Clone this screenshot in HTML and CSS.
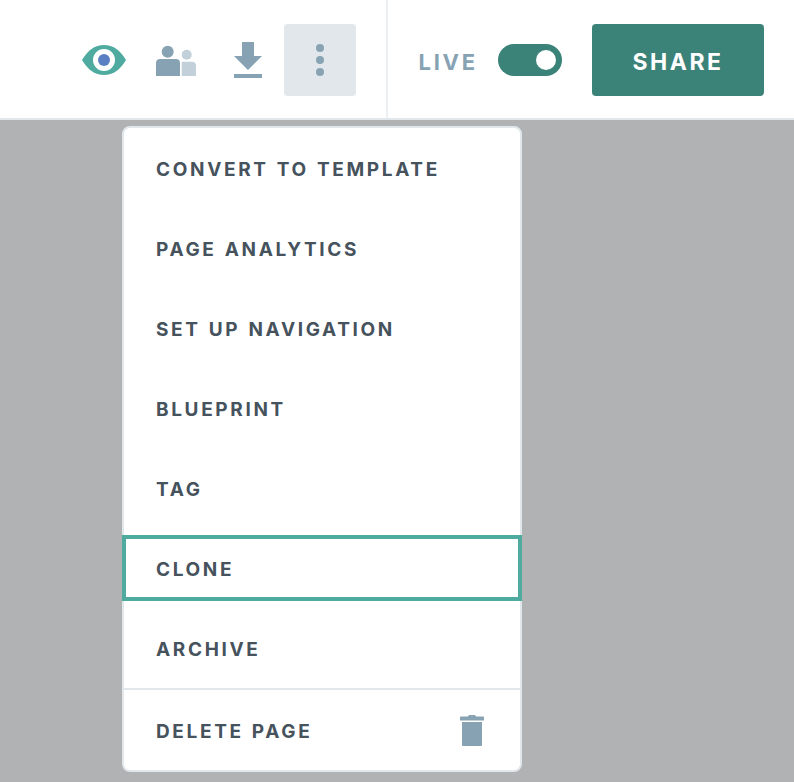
FILE: index.html
```html
<!DOCTYPE html>
<html lang="en">
<head>
    <meta charset="UTF-8">
    <meta name="viewport" content="width=device-width, initial-scale=1.0">
    <title>Page menu</title>
    <link rel="stylesheet" href="styles.css">
</head>
<body>
    <header class="toolbar">
        <div class="tools">
            <button class="tool" type="button" aria-label="Preview">
                <svg width="72" height="72" viewBox="0 0 72 72">
                    <path fill="#4fab9f" d="M14 36C20 26 27 21 36 21S52 26 58 36C52 46 45 51 36 51S20 46 14 36Z"/>
                    <circle cx="36" cy="36" r="11" fill="#fff"/>
                    <circle cx="36" cy="36" r="6" fill="#5a7fc2"/>
                </svg>
            </button>
            <button class="tool" type="button" aria-label="Collaborators">
                <svg width="72" height="72" viewBox="0 0 72 72">
                    <circle cx="46.7" cy="30.7" r="5" fill="#c2d0d9"/>
                    <path fill="#c2d0d9" d="M41.7 52V37.7H52C54.5 37.7 56 39.2 56 41.7V52Z"/>
                    <circle cx="27.7" cy="27.7" r="6" fill="#87a3b3"/>
                    <path fill="#87a3b3" d="M16 52V39C16 36.5 17.5 35 20 35H36C38.500 35 40 36.5 40 39V52Z"/>
                </svg>
            </button>
            <button class="tool" type="button" aria-label="Download">
                <svg width="72" height="72" viewBox="0 0 72 72">
                    <path fill="#87a3b3" d="M30 18H42V32H50L36 46L22 32H30Z"/>
                    <rect x="22" y="50" width="28" height="4" fill="#87a3b3"/>
                </svg>
            </button>
            <button class="tool tool-active" type="button" aria-label="More">
                <svg width="72" height="72" viewBox="0 0 72 72">
                    <circle cx="36" cy="24" r="4" fill="#87a3b3"/>
                    <circle cx="36" cy="36" r="4" fill="#87a3b3"/>
                    <circle cx="36" cy="48" r="4" fill="#87a3b3"/>
                </svg>
            </button>
        </div>
        <div class="publish">
            <span class="live-label">LIVE</span>
            <span class="switch"><span class="knob"></span></span>
            <button class="share" type="button">SHARE</button>
        </div>
    </header>

    <div class="menu">
        <ul class="menu-list">
            <li class="menu-item">CONVERT TO TEMPLATE</li>
            <li class="menu-item">PAGE ANALYTICS</li>
            <li class="menu-item">SET UP NAVIGATION</li>
            <li class="menu-item">BLUEPRINT</li>
            <li class="menu-item">TAG</li>
            <li class="menu-item menu-item-focus">CLONE</li>
            <li class="menu-item">ARCHIVE</li>
        </ul>
        <div class="menu-delete">
            <span class="delete-label">DELETE PAGE</span>
            <svg width="24" height="32" viewBox="0 0 24 32">
                <path fill="#87a3b3" d="M8 2.500C8 1.500 9 1 10 1H14C15 1 16 1.500 16 2.500H23C23.600 2.500 24 3 24 3.500V6.500H0V3.500C0 3 .4 2.500 1 2.500Z"/>
                <path fill="#87a3b3" d="M2 8H22V31C22 31.600 21.600 32 21 32H3C2.400 32 2 31.600 2 31Z"/>
            </svg>
        </div>
    </div>
</body>
</html>
```

FILE: styles.css
```css
* {
    box-sizing: border-box;
}

body {
    margin: 0;
    height: 782px;
    overflow: hidden;
    background-color: #b1b2b4;
    font-family: Inter, "Liberation Sans", sans-serif;
}

button {
    border: none;
    padding: 0;
    background: none;
    font: inherit;
    cursor: pointer;
}

.toolbar {
    display: flex;
    justify-content: flex-end;
    height: 120px;
    padding-right: 2px;
    background-color: #fff;
    border-bottom: 2px solid #e1e7ea;
}

.tools {
    display: flex;
    align-items: center;
    padding: 2px 30px 0 0;
    border-right: 2px solid #edf0f2;
}

.tool {
    display: block;
    width: 72px;
    height: 72px;
    border-radius: 4px;
}

.tool svg {
    display: block;
}

.tool-active {
    background-color: #e1e7ea;
}

.publish {
    display: flex;
    align-items: center;
    padding: 2px 28px 0 30px;
}

.live-label {
    padding-top: 3px;
    color: #87a3b3;
    font-size: 22px;
    font-weight: 700;
    letter-spacing: 2.800px;
}

.switch {
    display: flex;
    align-items: center;
    justify-content: flex-end;
    width: 64px;
    height: 32px;
    margin: 0 30px 0 20px;
    padding-right: 6px;
    border-radius: 16px;
    background-color: #3b8278;
}

.knob {
    width: 20px;
    height: 20px;
    border-radius: 50%;
    background-color: #fff;
}

.share {
    width: 172px;
    height: 72px;
    padding-top: 3px;
    border-radius: 4px;
    background-color: #3b8278;
    color: #fff;
    font-size: 23px;
    font-weight: 700;
    letter-spacing: 2.500px;
}

.menu {
    position: absolute;
    top: 126px;
    left: 122px;
    width: 400px;
    height: 646px;
    background-color: #fff;
    border: 2px solid #e1e7ea;
    border-radius: 8px;
    color: #46525c;
    font-size: 19px;
    font-weight: 700;
    letter-spacing: 2.650px;
    word-spacing: 1px;
}

.menu-list {
    display: flex;
    flex-direction: column;
    gap: 14px;
    margin: 0;
    padding: 8px 0 6px;
    list-style: none;
    border-bottom: 2px solid #e1e7ea;
}

.menu-item {
    display: flex;
    align-items: center;
    height: 66px;
    margin: 0 -2px;
    padding: 0 30px;
    border: 4px solid transparent;
}

.menu-item-focus {
    margin-top: -1px;
    margin-bottom: 1px;
    padding-top: 2px;
    border-color: #4fab9f;
}

.menu-delete {
    display: flex;
    align-items: center;
    justify-content: space-between;
    height: 80px;
    padding: 0 36px 0 32px;
}

.delete-label {
    padding-top: 3px;
}
```
